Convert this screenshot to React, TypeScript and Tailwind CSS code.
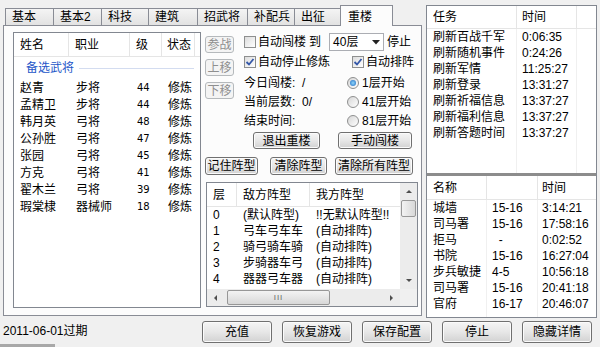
import type { ReactNode } from "react"

const tabs = [
  { label: "基本", w: "w-[49px]" },
  { label: "基本2", w: "w-[49px]" },
  { label: "科技", w: "w-[48px]" },
  { label: "建筑", w: "w-[50px]" },
  { label: "招武将", w: "w-[51px]" },
  { label: "补配兵", w: "w-[48px]" },
  { label: "出征", w: "w-[47px]" },
]

const generals = [
  ["赵青", "步将", "44", "修炼"],
  ["孟精卫", "步将", "44", "修炼"],
  ["韩月英", "弓将", "48", "修炼"],
  ["公孙胜", "弓将", "47", "修炼"],
  ["张园", "弓将", "45", "修炼"],
  ["方克", "弓将", "41", "修炼"],
  ["翟木兰", "弓将", "39", "修炼"],
  ["瑕棠棣", "器械师", "18", "修炼"],
]

const formations = [
  ["0", "(默认阵型)", "!!无默认阵型!!"],
  ["1", "弓车弓车车", "(自动排阵)"],
  ["2", "骑弓骑车骑", "(自动排阵)"],
  ["3", "步骑器车弓", "(自动排阵)"],
  ["4", "器器弓车器", "(自动排阵)"],
]

const tasks = [
  ["刷新百战千军", "0:06:35"],
  ["刷新随机事件", "0:24:26"],
  ["刷新军情", "11:25:27"],
  ["刷新登录", "13:31:27"],
  ["刷新祈福信息", "13:37:27"],
  ["刷新福利信息", "13:37:27"],
  ["刷新答题时间", "13:37:27"],
]

const buildings = [
  ["城墙", "15-16", "3:14:21"],
  ["司马署", "15-16", "17:58:16"],
  ["拒马", "\u00a0\u00a0-", "0:02:52"],
  ["书院", "15-16", "16:27:04"],
  ["步兵敏捷", "4-5", "10:56:18"],
  ["司马署", "15-16", "20:41:18"],
  ["官府", "16-17", "20:46:07"],
]

function Btn({ children, className, disabled }: { children: ReactNode; className?: string; disabled?: boolean }) {
  return (
    <button
      type="button"
      className={`flex items-center justify-center rounded-[3px] border leading-[12px] ${
        disabled
          ? "border-[#b5b9bc] bg-[#f4f4f4] text-[#8f8f8f]"
          : "border-[#707070] bg-linear-to-b from-[#f5f5f5] via-[#e7e7e7] to-[#d2d2d2] shadow-[inset_0_0_0_1px_#fbfbfb]"
      } ${className ?? ""}`}
    >
      {children}
    </button>
  )
}

function Check({ checked }: { checked?: boolean }) {
  return (
    <span className="flex h-[12px] w-[12px] shrink-0 items-center justify-center border border-[#8e8f8f] bg-linear-to-br from-[#dcdcdc] to-white">
      {checked && (
        <svg width="10" height="10" viewBox="0 0 10 10">
          <path d="M1.5 5 L4 7.5 L8.5 2" fill="none" stroke="#3457a8" strokeWidth="1.8" />
        </svg>
      )}
    </span>
  )
}

function Radio({ on }: { on?: boolean }) {
  return (
    <span className="flex h-[12px] w-[12px] shrink-0 items-center justify-center rounded-full border border-[#8e8f8f] bg-linear-to-br from-[#d6d6d6] to-white">
      {on && <span className="h-[6px] w-[6px] rounded-full bg-radial from-[#8fd6fa] to-[#1668c0]" />}
    </span>
  )
}

function Arrow({ dir }: { dir: "up" | "down" | "left" | "right" }) {
  const pts = {
    up: "1,5 4,2 7,5",
    down: "1,2 4,5 7,2",
    left: "5,1 2,4 5,7",
    right: "2,1 5,4 2,7",
  }[dir]
  return (
    <svg width="8" height="8" viewBox="0 0 8 8">
      <polygon points={pts} fill="#4d4d4d" />
    </svg>
  )
}

function GeneralList() {
  return (
    <div className="ml-[9px] mt-[6px] flex h-[276px] w-[188px] flex-col border border-[#828790] bg-white">
      <div className="flex h-[24px] shrink-0 items-center border-b border-[#e5e5e5]">
        <div className="flex h-full w-[55px] items-center border-r border-[#e5e5e5] pl-[6px]">姓名</div>
        <div className="flex h-full w-[61px] items-center border-r border-[#e5e5e5] pl-[6px]">职业</div>
        <div className="flex h-full w-[32px] items-center border-r border-[#e5e5e5] pl-[6px]">级</div>
        <div className="flex h-full w-[33px] items-center border-r border-[#e5e5e5] pl-[5px]">状态</div>
      </div>
      <div className="flex h-[22px] shrink-0 items-center pl-[12px] pr-[6px]">
        <span className="text-[#2456c8]">备选武将</span>
        <span className="ml-[5px] h-px flex-1 bg-[#d3dcf0]" />
      </div>
      {generals.map(([name, job, lv, st]) => (
        <div key={name} className="flex h-[17px] shrink-0 items-center">
          <div className="w-[56px] pl-[6px]">{name}</div>
          <div className="w-[61px] pl-[6px]">{job}</div>
          <div className="w-[32px] pl-[6px] font-['DejaVu_Sans',sans-serif] text-[10px]">{lv}</div>
          <div className="pl-[5px]">{st}</div>
        </div>
      ))}
    </div>
  )
}

function FormationList() {
  return (
    <div className="ml-[1px] mt-[7px] flex h-[125px] w-[212px] border border-[#828790] bg-white">
      <div className="flex w-[193px] flex-col">
        <div className="flex h-[24px] shrink-0 items-center border-b border-[#e5e5e5]">
          <div className="flex h-full w-[30px] items-center border-r border-[#e5e5e5] pl-[6px]">层</div>
          <div className="flex h-full w-[73px] items-center border-r border-[#e5e5e5] pl-[6px]">敌方阵型</div>
          <div className="flex h-full flex-1 items-center pl-[6px]">我方阵型</div>
        </div>
        {formations.map(([n, enemy, mine]) => (
          <div key={n} className="flex h-[16px] shrink-0 items-center overflow-hidden whitespace-nowrap">
            <div className="w-[30px] pl-[6px]">{n}</div>
            <div className="w-[73px] pl-[6px]">{enemy}</div>
            <div className="flex-1 pl-[6px]">{mine}</div>
          </div>
        ))}
        <div className="mt-auto flex h-[17px] shrink-0 items-center bg-[#ececec]">
          <div className="flex w-[17px] justify-center">
            <Arrow dir="left" />
          </div>
          <div className="ml-[3px] flex h-[15px] w-[103px] items-center justify-center rounded-[2px] border border-[#979797] bg-linear-to-b from-[#f3f3f3] to-[#d8d8d8] text-[8px] tracking-[1px] text-[#666]">
            III
          </div>
          <div className="ml-auto flex w-[17px] justify-center">
            <Arrow dir="right" />
          </div>
        </div>
      </div>
      <div className="flex w-[17px] flex-col bg-[#ececec]">
        <div className="flex h-[17px] items-center justify-center">
          <Arrow dir="up" />
        </div>
        <div className="mx-[1px] h-[17px] rounded-[2px] border border-[#979797] bg-linear-to-r from-[#f3f3f3] to-[#d8d8d8]" />
        <div className="flex-1" />
        <div className="flex h-[17px] items-center justify-center">
          <Arrow dir="down" />
        </div>
        <div className="h-[17px] bg-[#f0f0f0]" />
      </div>
    </div>
  )
}

function Middle() {
  return (
    <div className="ml-[4px] mt-[7px] flex w-[213px] flex-col">
      <div className="flex">
        <div className="flex w-[29px] flex-col gap-[6px] pt-[3px]">
          <Btn disabled className="h-[17px]">参战</Btn>
          <Btn disabled className="h-[17px]">上移</Btn>
          <Btn disabled className="h-[17px]">下移</Btn>
        </div>
        <div className="ml-[10px] flex flex-1 flex-col">
          <div className="flex h-[18px] items-center">
            <Check />
            <span className="ml-[2px]">自动闯楼</span>
            <span className="ml-[3px]">到</span>
            <div className="ml-[8px] flex h-[18px] w-[55px] items-center border border-[#abadb3] bg-white pl-[3px]">
              <span>40层</span>
              <span className="ml-auto mr-[3px] flex">
                <svg width="8" height="5" viewBox="0 0 8 5">
                  <polygon points="0,0 8,0 4,4.5" fill="#222" />
                </svg>
              </span>
            </div>
            <span className="ml-[3px]">停止</span>
          </div>
          <div className="mt-[3px] flex h-[16px] items-center">
            <div className="flex w-[108px] items-center">
              <Check checked />
              <span className="ml-[2px]">自动停止修炼</span>
            </div>
            <Check checked />
            <span className="ml-[2px]">自动排阵</span>
          </div>
          <div className="mt-[3px] flex">
            <div className="flex w-[103px] flex-col">
              <div className="flex h-[19px] items-center">今日闯楼:&nbsp;&nbsp;/</div>
              <div className="flex h-[19px] items-center">当前层数:&nbsp;&nbsp;0/</div>
              <div className="flex h-[19px] items-center">结束时间:</div>
            </div>
            <div className="flex flex-col">
              <div className="flex h-[19px] items-center gap-[3px]">
                <Radio on />
                <span>1层开始</span>
              </div>
              <div className="flex h-[19px] items-center gap-[3px]">
                <Radio />
                <span>41层开始</span>
              </div>
              <div className="flex h-[19px] items-center gap-[3px]">
                <Radio />
                <span>81层开始</span>
              </div>
            </div>
          </div>
        </div>
      </div>
      <div className="mt-[2px] flex">
        <Btn className="ml-[48px] h-[17px] w-[67px]">退出重楼</Btn>
        <Btn className="ml-[18px] h-[17px] w-[74px]">手动闯楼</Btn>
      </div>
      <div className="mt-[8px] flex">
        <Btn className="h-[18px] w-[53px]">记住阵型</Btn>
        <Btn className="ml-[12px] h-[18px] w-[57px]">清除阵型</Btn>
        <Btn className="ml-[8px] h-[18px] w-[78px]">清除所有阵型</Btn>
      </div>
      <FormationList />
    </div>
  )
}

function RightPanel() {
  return (
    <div className="ml-[4px] mt-[5px] flex h-[313px] w-[171px] flex-col border border-[#828790] bg-white">
      <div className="flex h-[167px] shrink-0 flex-col">
        <div className="flex h-[23px] shrink-0 border-b border-[#e5e5e5]">
          <div className="flex w-[90px] items-center border-r border-[#e5e5e5] pl-[6px]">任务</div>
          <div className="flex w-[60px] items-center border-r border-[#e5e5e5] pl-[5px]">时间</div>
        </div>
        {tasks.map(([t, time]) => (
          <div key={t} className="flex h-[16px] shrink-0">
            <div className="flex w-[90px] items-center border-r border-[#f0f0f0] pl-[6px]">{t}</div>
            <div className="flex w-[60px] items-center border-r border-[#f0f0f0] pl-[5px]">{time}</div>
          </div>
        ))}
        <div className="flex flex-1">
          <div className="w-[90px] border-r border-[#f0f0f0]" />
          <div className="w-[60px] border-r border-[#f0f0f0]" />
        </div>
      </div>
      <div className="h-[3px] shrink-0 bg-[#8c8c8c]" />
      <div className="flex flex-1 flex-col">
        <div className="flex h-[24px] shrink-0 border-b border-[#e5e5e5]">
          <div className="flex w-[60px] items-center border-r border-[#e5e5e5] pl-[6px]">名称</div>
          <div className="w-[51px] border-r border-[#e5e5e5]" />
          <div className="flex items-center pl-[4px]">时间</div>
        </div>
        {buildings.map(([n, lv, time], i) => (
          <div key={i} className="flex h-[16px] shrink-0">
            <div className="flex w-[60px] items-center border-r border-[#f0f0f0] pl-[6px]">{n}</div>
            <div className="flex w-[51px] items-center border-r border-[#f0f0f0] pl-[5px]">{lv}</div>
            <div className="flex items-center pl-[4px]">{time}</div>
          </div>
        ))}
        <div className="flex flex-1">
          <div className="w-[60px] border-r border-[#f0f0f0]" />
          <div className="w-[51px] border-r border-[#f0f0f0]" />
        </div>
      </div>
    </div>
  )
}

export default function App() {
  return (
    <div className="flex h-[347px] w-[600px] flex-col overflow-hidden bg-[#f0f0f0] font-['Liberation_Sans','Noto_Sans_CJK_SC',sans-serif] text-[12px] leading-[12px] text-black">
      <div className="flex h-[318px] shrink-0 items-start">
        <div className="ml-[3px] flex w-[419px] flex-col">
          <div className="flex h-[25px] items-end pl-[2px]">
            {tabs.map((t, i) => (
              <div
                key={t.label}
                className={`flex h-[17px] items-center border border-b-0 border-[#898c95] bg-linear-to-b from-[#f4f4f4] to-[#e2e2e2] pl-[6px] ${t.w} ${
                  i > 0 ? "-ml-px" : ""
                }`}
              >
                {t.label}
              </div>
            ))}
            <div className="relative z-10 -mb-px -ml-px h-[21px] w-[53px] border border-b-0 border-[#898c95] bg-[#fcfcfc] pl-[7px] pt-[5px]">
              重楼
            </div>
          </div>
          <div className="flex h-[291px] items-start border border-[#898c95] bg-[#fcfcfc]">
            <GeneralList />
            <Middle />
          </div>
        </div>
        <RightPanel />
      </div>
      <div className="flex flex-1">
        <div className="flex w-[202px] flex-col pl-[3px] pt-[7px]">
          <span>2011-06-01过期</span>
          <div className="-ml-[3px] mt-auto h-[3px] w-[55px] bg-[#a8a8a8]" />
        </div>
        <div className="flex gap-[10px] pt-[3px]">
          <Btn className="h-[22px] w-[70px]">充值</Btn>
          <Btn className="h-[22px] w-[70px]">恢复游戏</Btn>
          <Btn className="h-[22px] w-[70px]">保存配置</Btn>
          <Btn className="h-[22px] w-[70px]">停止</Btn>
          <Btn className="h-[22px] w-[70px]">隐藏详情</Btn>
        </div>
      </div>
    </div>
  )
}
